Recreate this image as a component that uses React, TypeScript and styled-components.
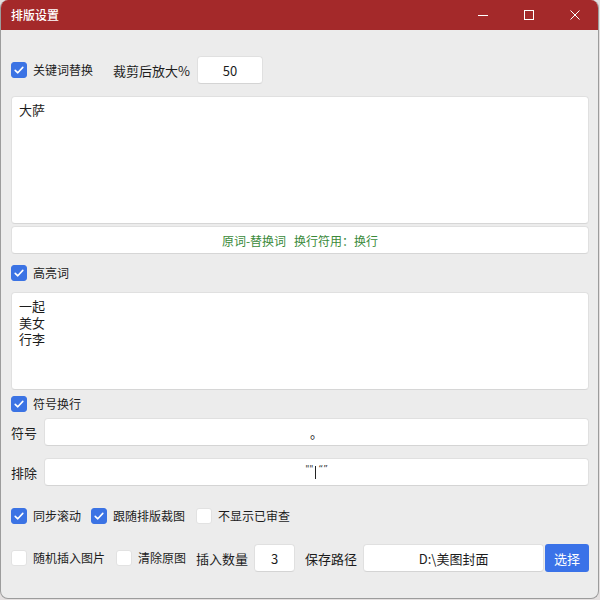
import React from "react";
import styled, { createGlobalStyle } from "styled-components";

const GlobalStyle = createGlobalStyle`
  html, body {
    margin: 0;
    padding: 0;
    background: #e4e0e0;
    font-family: "Noto Sans CJK SC", "Microsoft YaHei", sans-serif;
  }
  * { box-sizing: border-box; }
`;

const Window = styled.div`
  width: 599px;
  height: 599px;
  background: #ececec;
  border: 1px solid #9c9c9c;
  border-top: none;
  border-radius: 8px;
  overflow: hidden;
  display: flex;
  flex-direction: column;
`;

const TitleBar = styled.div`
  height: 30px;
  flex: none;
  background: #a4292a;
  display: flex;
  align-items: center;
  padding-left: 10px;
`;

const TitleText = styled.div`
  flex: 1;
  color: #ffffff;
  font-size: 12px;
  font-weight: 500;
  line-height: 30px;
`;

const Controls = styled.div`
  display: flex;
  height: 100%;
`;

const ControlButton = styled.div`
  width: 46px;
  height: 100%;
  display: flex;
  align-items: center;
  justify-content: center;
`;

const Content = styled.div`
  flex: 1;
  display: flex;
  flex-direction: column;
  padding: 26px 9px 0 10px;
`;

const Row = styled.div<{ $mt?: number; $gap?: number; $h?: number }>`
  display: flex;
  align-items: center;
  margin-top: ${(p) => p.$mt ?? 0}px;
  gap: ${(p) => p.$gap ?? 0}px;
  height: ${(p) => p.$h ?? 28}px;
`;

const CheckItem = styled.label<{ $mr?: number }>`
  display: flex;
  align-items: center;
  gap: 6px;
  margin-right: ${(p) => p.$mr ?? 0}px;
`;

const Box = styled.span<{ $checked: boolean }>`
  width: 16px;
  height: 16px;
  border-radius: 3px;
  flex: none;
  display: flex;
  align-items: center;
  justify-content: center;
  background: ${(p) => (p.$checked ? "#3b73e4" : "#ffffff")};
  border: 1px solid ${(p) => (p.$checked ? "#3b73e4" : "#e2e2e2")};
`;

const CheckText = styled.span`
  font-size: 12px;
  line-height: 16px;
  color: #1c1c1c;
  white-space: nowrap;
`;

const FieldLabel = styled.span<{ $mr?: number; $ml?: number }>`
  font-size: 13px;
  color: #1c1c1c;
  white-space: nowrap;
  margin-right: ${(p) => p.$mr ?? 0}px;
  margin-left: ${(p) => p.$ml ?? 0}px;
`;

const Field = styled.div<{ $w?: number; $grow?: boolean }>`
  height: 28px;
  width: ${(p) => (p.$w ? `${p.$w}px` : "auto")};
  flex: ${(p) => (p.$grow ? "1" : "none")};
  background: #ffffff;
  border: 1px solid #e0e0e0;
  border-bottom-color: #d4d4d4;
  border-radius: 4px;
  display: flex;
  align-items: center;
  justify-content: center;
  font-size: 13px;
  color: #1c1c1c;
  white-space: nowrap;
`;

const Caret = styled.span`
  display: inline-block;
  width: 1px;
  height: 13px;
  background: #222;
  margin: 0 2px;
  vertical-align: middle;
`;

const Quotes = styled.span`
  font-size: 9px;
  font-family: "DejaVu Sans", sans-serif;
  color: #333;
  position: relative;
  top: -3px;
`;

const TextArea = styled.div<{ $h: number; $mt: number }>`
  height: ${(p) => p.$h}px;
  margin-top: ${(p) => p.$mt}px;
  background: #ffffff;
  border: 1px solid #e0e0e0;
  border-bottom-color: #d6d6d6;
  border-radius: 4px;
  padding: 5px 7px;
  font-size: 13px;
  line-height: 16.5px;
  color: #1c1c1c;
  white-space: pre-line;
`;

const Hint = styled.div`
  height: 28px;
  margin-top: 2px;
  background: #ffffff;
  border: 1px solid #e0e0e0;
  border-bottom-color: #d6d6d6;
  border-radius: 4px;
  display: flex;
  align-items: center;
  justify-content: center;
  font-size: 12px;
  color: #3a8a3a;
  white-space: pre;
`;

const Button = styled.div`
  width: 44px;
  height: 28px;
  margin-left: 1px;
  background: #3a72e8;
  border-radius: 3px;
  color: #ffffff;
  font-size: 13px;
  display: flex;
  align-items: center;
  justify-content: center;
`;

const Check = ({ checked }: { checked: boolean }) => (
  <Box $checked={checked}>
    {checked && (
      <svg width="12" height="12" viewBox="0 0 12 12">
        <path d="M2.2 6.3 L4.8 8.8 L9.8 3.4" fill="none" stroke="#fff" strokeWidth="1.6" strokeLinecap="round" strokeLinejoin="round" />
      </svg>
    )}
  </Box>
);

const CheckBox = ({ checked, label, mr }: { checked: boolean; label: string; mr?: number }) => (
  <CheckItem $mr={mr}>
    <Check checked={checked} />
    <CheckText>{label}</CheckText>
  </CheckItem>
);

export default function App() {
  return (
    <>
      <GlobalStyle />
      <Window>
        <TitleBar>
          <TitleText>排版设置</TitleText>
          <Controls>
            <ControlButton>
              <svg width="10" height="10" viewBox="0 0 10 10">
                <path d="M0 5.5 H10" stroke="#fff" strokeWidth="1" />
              </svg>
            </ControlButton>
            <ControlButton>
              <svg width="10" height="10" viewBox="0 0 10 10">
                <rect x="0.5" y="0.5" width="9" height="9" fill="none" stroke="#fff" strokeWidth="1" />
              </svg>
            </ControlButton>
            <ControlButton>
              <svg width="10" height="10" viewBox="0 0 10 10">
                <path d="M0.5 0.5 L9.5 9.5 M9.5 0.5 L0.5 9.5" stroke="#fff" strokeWidth="1" />
              </svg>
            </ControlButton>
          </Controls>
        </TitleBar>
        <Content>
          <Row>
            <CheckBox checked label="关键词替换" mr={20} />
            <FieldLabel $mr={7}>裁剪后放大%</FieldLabel>
            <Field $w={66}>50</Field>
          </Row>
          <TextArea $h={128} $mt={12}>大萨</TextArea>
          <Hint>{"原词-替换词   换行符用：换行"}</Hint>
          <Row $mt={11} $h={16}>
            <CheckBox checked label="高亮词" />
          </Row>
          <TextArea $h={98} $mt={11}>{"一起\n美女\n行李"}</TextArea>
          <Row $mt={6} $h={16}>
            <CheckBox checked label="符号换行" />
          </Row>
          <Row $mt={6} $gap={7}>
            <FieldLabel>符号</FieldLabel>
            <Field $grow>。</Field>
          </Row>
          <Row $mt={12} $gap={7}>
            <FieldLabel>排除</FieldLabel>
            <Field $grow>
              <Quotes>""</Quotes>
              <Caret />
              <Quotes>“”</Quotes>
            </Field>
          </Row>
          <Row $mt={22} $h={16}>
            <CheckBox checked label="同步滚动" mr={10} />
            <CheckBox checked label="跟随排版裁图" mr={11} />
            <CheckBox checked={false} label="不显示已审查" />
          </Row>
          <Row $mt={20}>
            <CheckBox checked={false} label="随机插入图片" mr={11} />
            <CheckBox checked={false} label="清除原图" mr={10} />
            <FieldLabel $mr={6}>插入数量</FieldLabel>
            <Field $w={41}>3</Field>
            <FieldLabel $mr={6} $ml={10}>保存路径</FieldLabel>
            <Field $w={181}>D:\美图封面</Field>
            <Button>选择</Button>
          </Row>
        </Content>
      </Window>
    </>
  );
}
